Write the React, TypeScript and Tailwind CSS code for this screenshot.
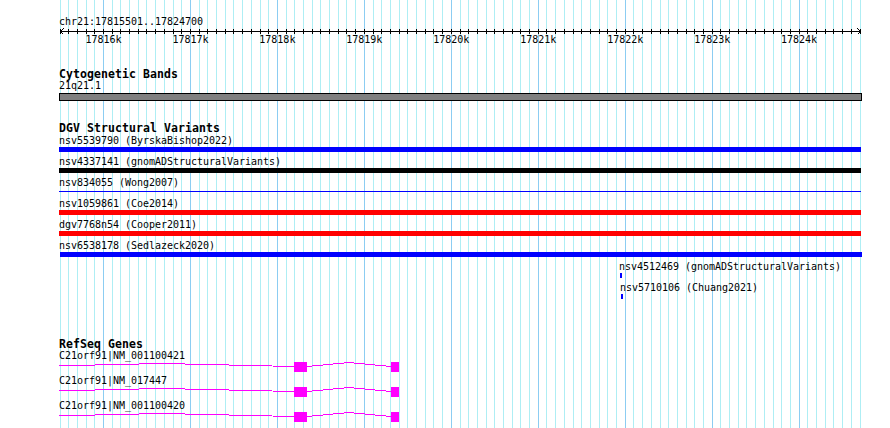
const BP_START = 17815500;
const PX_PER_BP = 800 / 9200;
const gridX = Array.from({ length: 93 }, (_, k) => Math.floor(60 + k * 100 * PX_PER_BP));
const ticksK = [17816, 17817, 17818, 17819, 17820, 17821, 17822, 17823, 17824];

function Grid() {
  return (
    <svg width={890} height={428} className="pointer-events-none absolute inset-0" shapeRendering="crispEdges">
      {gridX.map((x, k) => {
        const major = (BP_START / 100 + k) % 10 === 0;
        return <rect key={k} x={x} y={0} width={1} height={428} fill={major ? '#8ccdf2' : '#aeeef4'} />;
      })}
    </svg>
  );
}

function Ruler() {
  return (
    <svg width={890} height={7} className="block" shapeRendering="crispEdges">
      <rect x={60} y={3} width={800} height={1} fill="#000" />
      {gridX.map((x, k) => (
        <rect key={k} x={x} y={1} width={1} height={5} fill="#000" />
      ))}
      <polyline points="63.5,0.5 60.5,3.5 63.5,6.5" fill="none" stroke="#000" />
      <polyline points="857.5,0.5 860.5,3.5 857.5,6.5" fill="none" stroke="#000" />
    </svg>
  );
}

function Label({ children, className = '' }: { children: React.ReactNode; className?: string }) {
  return <div className={`h-[11px] whitespace-pre text-[10px] leading-[10px] tracking-[-0.02px] ${className}`}>{children}</div>;
}

function Title({ children, className = '' }: { children: React.ReactNode; className?: string }) {
  return <div className={`h-[12px] pl-[59px] text-[11.5px] font-bold leading-[10.5px] tracking-[0.08px] ${className}`}>{children}</div>;
}

type Variant = { name: string; color: string; kind: 'bar' | 'line' | 'mark'; start: number };

const variants: Variant[] = [
  { name: 'nsv5539790 (ByrskaBishop2022)', color: 'bg-[#0000ff]', kind: 'bar', start: 59 },
  { name: 'nsv4337141 (gnomADStructuralVariants)', color: 'bg-black', kind: 'bar', start: 59 },
  { name: 'nsv834055 (Wong2007)', color: 'bg-[#0000ff]', kind: 'line', start: 59 },
  { name: 'nsv1059861 (Coe2014)', color: 'bg-[#ff0000]', kind: 'bar', start: 59 },
  { name: 'dgv7768n54 (Cooper2011)', color: 'bg-[#ff0000]', kind: 'bar', start: 59 },
  { name: 'nsv6538178 (Sedlazeck2020)', color: 'bg-[#0000ff]', kind: 'bar', start: 60 },
  { name: 'nsv4512469 (gnomADStructuralVariants)', color: 'bg-[#0000ff]', kind: 'mark', start: 620 },
  { name: 'nsv5710106 (Chuang2021)', color: 'bg-[#0000ff]', kind: 'mark', start: 621 },
];

function VariantRow({ v }: { v: Variant }) {
  return (
    <div className="flex flex-col">
      <div style={{ paddingLeft: v.kind === 'mark' ? v.start - 1 : 59 }}>
        <Label>{v.name}</Label>
      </div>
      <div className="flex h-[5px] items-center" style={{ paddingLeft: v.start }}>
        {v.kind === 'bar' && <div className={`h-[5px] ${v.color}`} style={{ width: 861 - v.start + (v.start === 60 ? 1 : 0) }} />}
        {v.kind === 'line' && <div className={`h-px w-[802px] ${v.color}`} />}
        {v.kind === 'mark' && <div className={`h-[5px] w-[2px] ${v.color}`} />}
      </div>
    </div>
  );
}

function GeneModel() {
  return (
    <svg width={341} height={10} className="ml-[59px] block" shapeRendering="crispEdges">
      <polyline points="-30,4.5 103,1.5 235,4.5" fill="none" stroke="#ff00ff" strokeWidth={1} />
      <polyline points="248,4.5 290,0.5 332,4.5" fill="none" stroke="#ff00ff" strokeWidth={1} />
      <rect x={235} y={0} width={13} height={10} fill="#ff00ff" />
      <rect x={332} y={0} width={8} height={10} fill="#ff00ff" />
    </svg>
  );
}

const genes = ['C21orf91|NM_001100421', 'C21orf91|NM_017447', 'C21orf91|NM_001100420'];

export default function App() {
  return (
    <div className="relative h-[428px] w-[890px] overflow-hidden bg-white font-['DejaVu_Sans_Mono',monospace] text-black">
      <Grid />
      <div className="relative flex flex-col">
        <Label className="mt-[17px] pl-[59px]">chr21:17815501..17824700</Label>
        <Ruler />
        <div className="flex pl-[60px]">
          {ticksK.map((t) => (
            <div key={t} className="w-[86.96px] shrink-0 text-center">
              <Label>{t}k</Label>
            </div>
          ))}
        </div>

        <Title className="mt-[23px]">Cytogenetic Bands</Title>
        <Label className="pl-[59px]">21q21.1</Label>
        <div className="ml-[59px] mt-px h-[8px] w-[803px] border border-black bg-[#808080]" />

        <Title className="mt-[22px]">DGV Structural Variants</Title>
        <div className="mt-px flex flex-col gap-[5px]">
          {variants.map((v) => (
            <VariantRow key={v.name} v={v} />
          ))}
        </div>

        <Title className="mt-[40px]">RefSeq Genes</Title>
        <div className="flex flex-col gap-[4px]">
          {genes.map((g) => (
            <div key={g} className="flex flex-col">
              <Label className="pl-[59px]">{g}</Label>
              <GeneModel />
            </div>
          ))}
        </div>
      </div>
    </div>
  );
}
